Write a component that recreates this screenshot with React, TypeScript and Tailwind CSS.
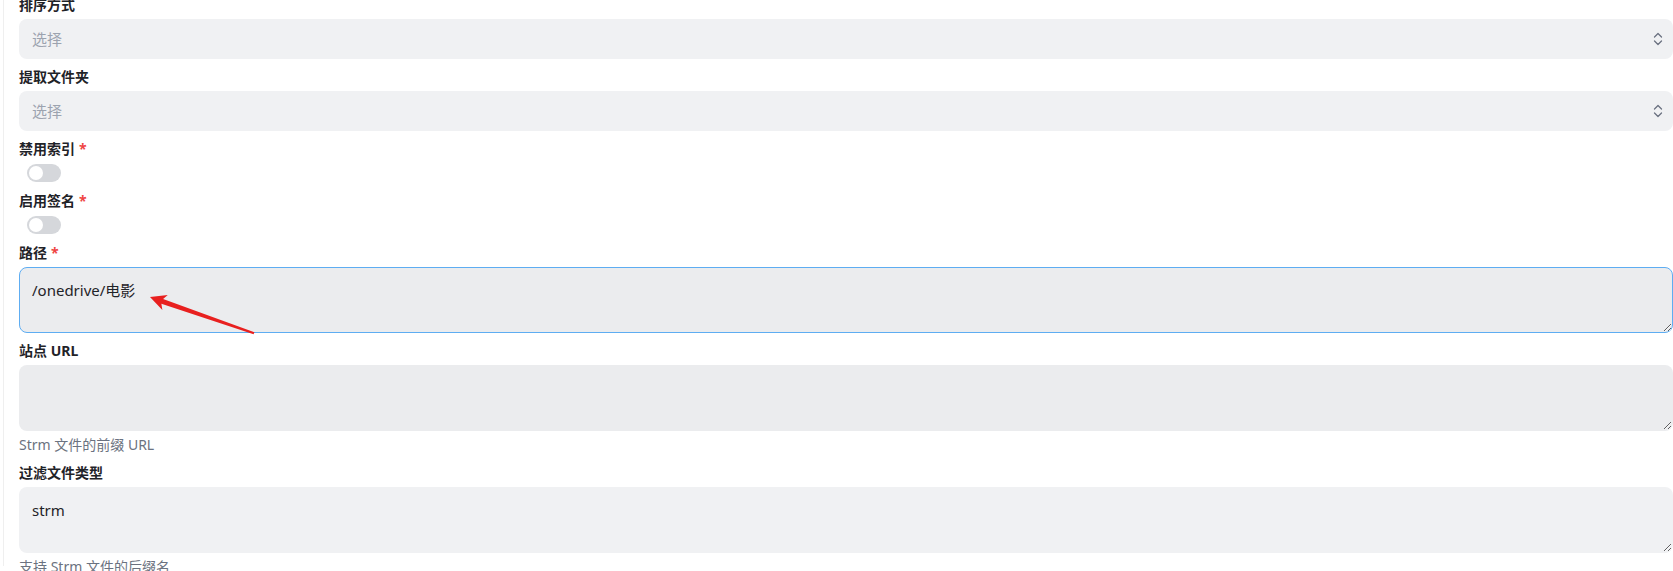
import React from "react";

const font = { fontFamily: '"Noto Sans", "Noto Sans CJK SC", sans-serif' };

function Label({ text, required }: { text: string; required?: boolean }) {
  return (
    <div className="h-5 text-[14px] leading-5 font-bold text-[#1f2328] flex items-center">
      <span>{text}</span>
      {required && <span className="ml-1 text-[#ef4444] font-bold">*</span>}
    </div>
  );
}

function Chevrons() {
  return (
    <svg width="10" height="14" viewBox="0 0 10 14" fill="none" stroke="#6b7280" strokeWidth="1.3" strokeLinecap="round" strokeLinejoin="round">
      <path d="M1.5 5 L5 1.5 L8.5 5" />
      <path d="M1.5 9 L5 12.5 L8.5 9" />
    </svg>
  );
}

function SelectBox() {
  return (
    <div className="mt-1 h-10 rounded-lg bg-[#f0f1f3] flex items-center justify-between pl-[13px] pr-[10px]">
      <span className="text-[15px] text-[#9ca3af]">选择</span>
      <Chevrons />
    </div>
  );
}

function Toggle() {
  return (
    <div className="mt-1 h-5 flex items-center pl-2">
      <div className="w-[34px] h-[18px] rounded-full bg-[#d5d7db] flex items-center px-[2px]">
        <div className="w-[14px] h-[14px] rounded-full bg-white" />
      </div>
    </div>
  );
}

function Area({ value, focused, bg }: { value: string; focused?: boolean; bg: string }) {
  return (
    <textarea
      defaultValue={value}
      className={
        "mt-1 block w-full h-[66px] rounded-lg border px-3 py-3 text-[15px] leading-5 text-[#1f2328] outline-none resize-y " +
        bg +
        " " +
        (focused ? "border-[#5eadf2]" : "border-transparent")
      }
      style={font}
    />
  );
}

function Help({ text }: { text: string }) {
  return <div className="mt-1 h-5 text-[14px] leading-5 text-[#6b7280]">{text}</div>;
}

export default function App() {
  return (
    <div className="w-[1673px] h-[571px] overflow-hidden bg-white" style={font}>
      <div className="pl-[3px] h-full">
        <div className="relative h-full border-l border-[#efefef] pl-[15px] -mt-[5px]">
          <Label text="排序方式" />
          <SelectBox />
          <div className="mt-2">
            <Label text="提取文件夹" />
            <SelectBox />
          </div>
          <div className="mt-2">
            <Label text="禁用索引" required />
            <Toggle />
          </div>
          <div className="mt-2">
            <Label text="启用签名" required />
            <Toggle />
          </div>
          <div className="mt-2">
            <Label text="路径" required />
            <Area value="/onedrive/电影" focused bg="bg-[#ebecee]" />
          </div>
          <div className="mt-2">
            <Label text="站点 URL" />
            <Area value="" bg="bg-[#ebecee]" />
            <Help text="Strm 文件的前缀 URL" />
          </div>
          <div className="mt-2">
            <Label text="过滤文件类型" />
            <Area value="strm" bg="bg-[#f0f1f3]" />
            <Help text="支持 Strm 文件的后缀名" />
          </div>
          <svg
            className="absolute left-[136px] top-[290px] pointer-events-none"
            width="130"
            height="60"
            viewBox="0 0 130 60"
          >
            <polygon
              points="10,12 27.77,9.89 23.08,14.06 114.4,47.3 113.6,49.2 21.38,18.76 22.35,24.95"
              fill="#e8201f"
            />
          </svg>
        </div>
      </div>
    </div>
  );
}
